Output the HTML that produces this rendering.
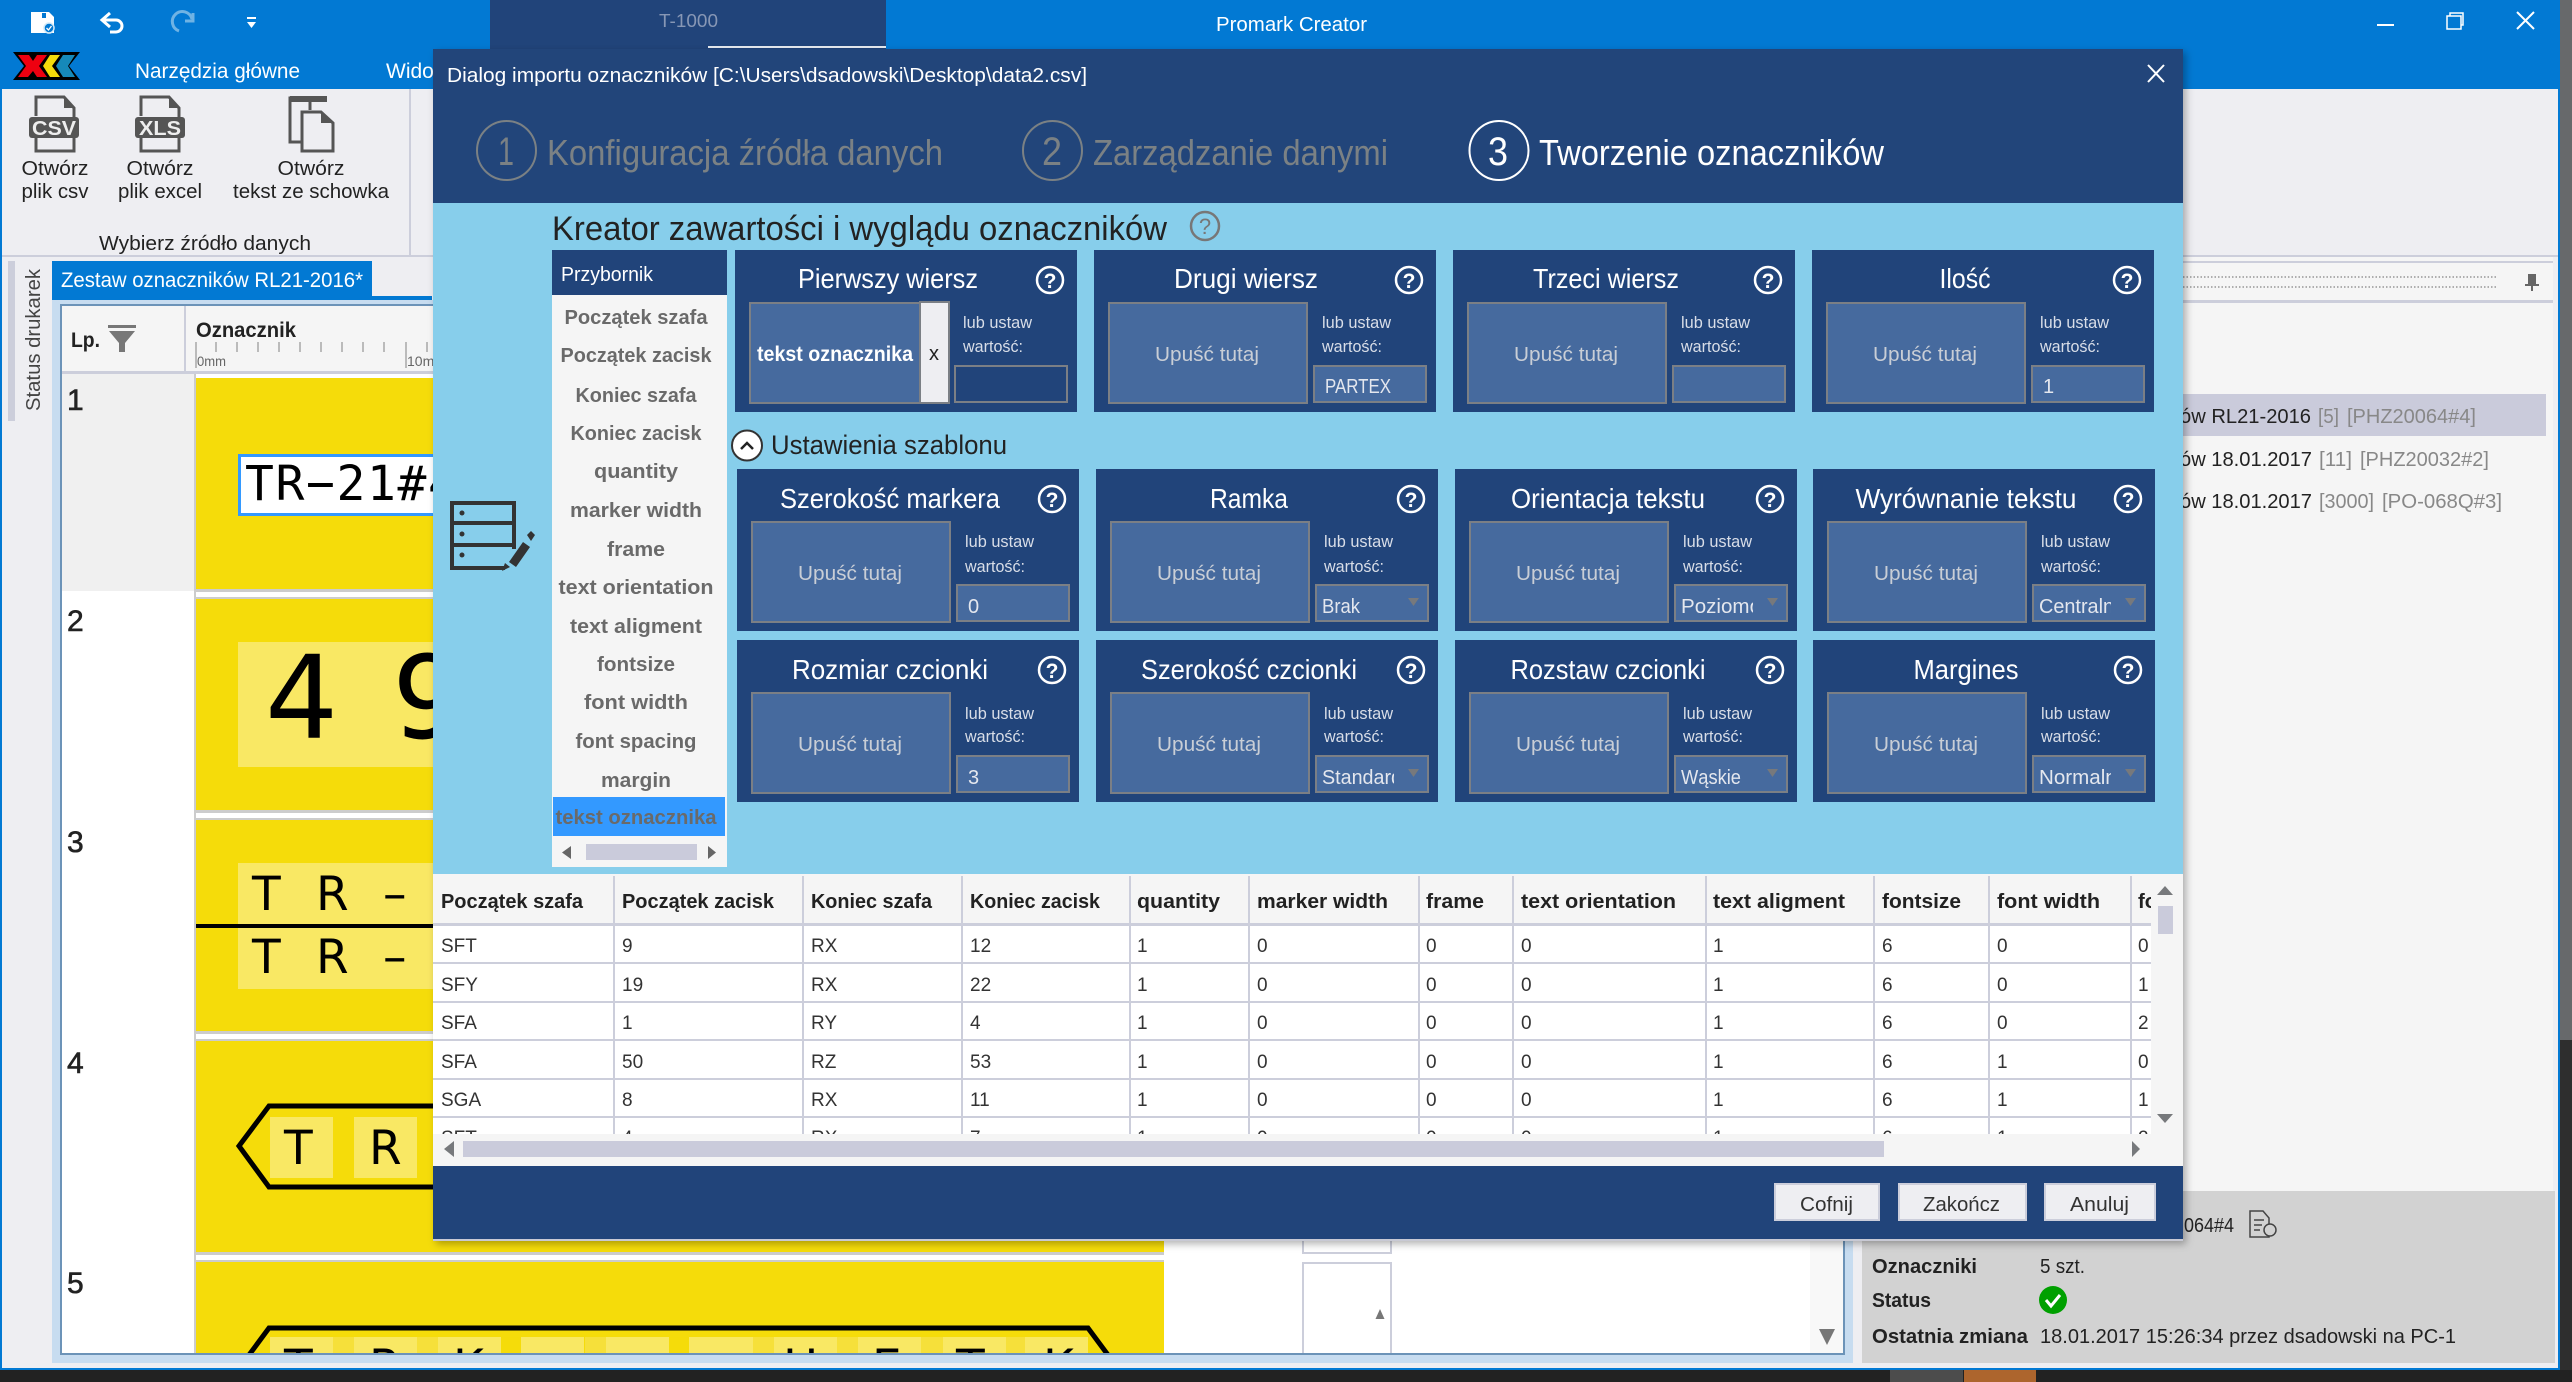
<!DOCTYPE html>
<html lang="pl"><head><meta charset="utf-8"><title>Promark Creator</title>
<style>
html,body{margin:0;padding:0;width:2572px;height:1382px;overflow:hidden;background:#fff}
svg{display:block}
text{font-family:"Liberation Sans",sans-serif;white-space:pre}
.t{font-size:28px;fill:#fff;text-anchor:middle}
.q{font-size:21px;font-weight:bold;fill:#fff;text-anchor:middle}
.s{font-size:17px;fill:#d9dee8}
.u{font-size:20px;fill:#c9ced6;text-anchor:middle}
.v{font-size:20px;fill:#e4e7ee}
.l{font-size:20px;font-weight:bold;fill:#6a6a6a;text-anchor:middle}
.h{font-size:20px;font-weight:bold;fill:#222}
.c{font-size:19px;fill:#333}
.r{font-size:20px;fill:#222}
.g{font-size:20px;fill:#888}
.b{font-size:20px;font-weight:bold;fill:#222}
.d{font-family:"DejaVu Sans",sans-serif;fill:#000}
</style></head><body>
<svg xmlns="http://www.w3.org/2000/svg" width="2572" height="1382" viewBox="0 0 2572 1382">
<defs>
<clipPath id="tc"><rect x="433" y="876" width="1718" height="258"/></clipPath>
<clipPath id="lc"><rect x="62" y="306" width="1781" height="1047"/></clipPath>
<clipPath id="sel"><rect x="226" y="115" width="72" height="38"/></clipPath>
<filter id="sh" x="-2%" y="-2%" width="104%" height="104%"><feDropShadow dx="3" dy="3" stdDeviation="4" flood-color="#000" flood-opacity=".3"/></filter>
<g id="cd">
<rect width="342" height="162" fill="#21447a"/>
<rect x="15" y="53" width="198" height="100" fill="#466a9e" stroke="#7b7f85" stroke-width="2"/>
<rect x="220" y="116" width="112" height="36" fill="#466a9e" stroke="#7b7f85" stroke-width="2"/>
<circle cx="315" cy="30" r="13" fill="none" stroke="#fff" stroke-width="2.5"/>
</g>
<path id="ar" d="M0 0h11l-5.500 8z" fill="#77797c"/>
</defs>

<!-- base -->
<rect width="2572" height="1382" fill="#f5f5f5"/>
<rect x="2560" y="0" width="12" height="1040" fill="#67696b"/>
<rect x="2560" y="1040" width="12" height="342" fill="#2e2e2e"/>
<rect x="0" y="1370" width="2572" height="12" fill="#222"/>
<rect x="1890" y="1370" width="73" height="12" fill="#4c4c4c"/>
<rect x="1964" y="1370" width="72" height="12" fill="#ad652d"/>
<rect x="0" y="0" width="2560" height="89" fill="#0279d3"/>
<rect x="0" y="0" width="2" height="1370" fill="#0279d3"/>
<rect x="2558" y="0" width="2" height="1370" fill="#0279d3"/>
<rect x="0" y="1368" width="2560" height="2" fill="#0279d3"/>
<rect x="2" y="89" width="2556" height="1279" fill="#eeeef2"/>
<rect x="409" y="89" width="2" height="166" fill="#cccedb"/>
<rect x="2" y="255" width="2556" height="2" fill="#cccedb"/>

<!-- title bar -->
<path d="M31 12h18l5 5v16H31z" fill="#fff"/><rect x="42" y="13" width="4" height="5" fill="#0279d3"/>
<circle cx="49" cy="28" r="5" fill="#0279d3" stroke="#d4eaf8" stroke-width="1.500"/>
<path d="M46.500 28l2 2 3-4" fill="none" stroke="#fff" stroke-width="1.300"/>
<path d="M110 13l-8 7 8 7M102 20h14a6 6 0 0 1 0 12h-6" fill="none" stroke="#fff" stroke-width="3"/>
<path d="M192 19a10 10 0 1 0-13 12M193 13v8h-8" fill="none" stroke="#6fb3e4" stroke-width="3"/>
<path d="M247 17h9v2h-9zM247 22h9l-4.500 6z" fill="#fff"/>
<rect x="490" y="0" width="396" height="49" fill="#21447a"/>
<rect x="708" y="46" width="178" height="2" fill="#e8ecf2"/>
<text x="659" y="27" font-size="18" fill="#8797b5" textLength="59" lengthAdjust="spacingAndGlyphs">T-1000</text>
<text x="1216" y="31" font-size="20" fill="#fff" textLength="151" lengthAdjust="spacingAndGlyphs">Promark Creator</text>
<rect x="2377" y="24" width="17" height="2" fill="#fff"/>
<path d="M2447 16h14v13h-14zM2450 16v-3h13v12h-2" fill="none" stroke="#fff" stroke-width="1.500"/>
<path d="M2517 12l17 17M2534 12l-17 17" stroke="#fff" stroke-width="2" fill="none"/>

<!-- logo -->
<path d="M13 52H80L69 66L80 80H13L24 66z" fill="#000"/>
<path d="M18 55H29L33 61L37 55H47L39 66L47 77H37L33 71L28 77H18L26 66z" fill="#ee0010"/>
<path d="M50 55h10L52 66l8 11H50L43 66z" fill="#f5dc0a"/>
<path d="M63 55h12L68 66l7 11H63L56 66z" fill="#1689b9"/>
<text x="135" y="78" font-size="21" fill="#fff" textLength="165" lengthAdjust="spacingAndGlyphs">Narzędzia główne</text>
<text x="386" y="78" font-size="21" fill="#fff">Widok</text>

<!-- ribbon -->
<g fill="none" stroke="#555" stroke-width="3">
<path d="M36 116V97h28l10 11v9M36 138v13h38v-13"/>
<path d="M141 116V97h28l10 11v9M141 138v13h38v-13"/>
<path d="M310 110v-12h-20v44h11M302 112v39h31v-28l-12-11z"/>
</g>
<rect x="290" y="96" width="37" height="6" fill="#555"/>
<path d="M64 97v11h10zM169 97v11h10zM321 112v11h12z" fill="#555"/>
<rect x="29" y="117" width="50" height="21" rx="3" fill="#555"/>
<rect x="135" y="117" width="50" height="21" rx="3" fill="#555"/>
<text x="54" y="135" font-size="20" font-weight="bold" fill="#eee" text-anchor="middle" textLength="44" lengthAdjust="spacingAndGlyphs">CSV</text>
<text x="160" y="135" font-size="20" font-weight="bold" fill="#eee" text-anchor="middle" textLength="42" lengthAdjust="spacingAndGlyphs">XLS</text>
<g font-size="20" fill="#222" text-anchor="middle">
<text x="55" y="175" textLength="67" lengthAdjust="spacingAndGlyphs">Otwórz</text>
<text x="55" y="198" textLength="67" lengthAdjust="spacingAndGlyphs">plik csv</text>
<text x="160" y="175" textLength="67" lengthAdjust="spacingAndGlyphs">Otwórz</text>
<text x="160" y="198" textLength="84" lengthAdjust="spacingAndGlyphs">plik excel</text>
<text x="311" y="175" textLength="67" lengthAdjust="spacingAndGlyphs">Otwórz</text>
<text x="311" y="198" textLength="156" lengthAdjust="spacingAndGlyphs">tekst ze schowka</text>
<text x="205" y="250" textLength="212" lengthAdjust="spacingAndGlyphs">Wybierz źródło danych</text>
</g>

<!-- left -->
<rect x="8" y="261" width="7" height="160" fill="#cccedb"/>
<text transform="translate(40,411) rotate(-90)" font-size="20" fill="#444" textLength="142" lengthAdjust="spacingAndGlyphs">Status drukarek</text>
<rect x="52" y="261" width="320" height="35" fill="#0279d3"/>
<rect x="52" y="296" width="380" height="4" fill="#0279d3"/>
<text x="61" y="287" font-size="21" fill="#fff" textLength="302" lengthAdjust="spacingAndGlyphs">Zestaw oznaczników RL21-2016*</text>
<rect x="52" y="300" width="1801" height="63" fill="#c7dcf0"/>
<rect x="52" y="300" width="8" height="1063" fill="#c7dcf0"/>
<rect x="52" y="1353" width="1801" height="10" fill="#c7dcf0"/>
<rect x="1845" y="300" width="8" height="1063" fill="#c7dcf0"/>
<rect x="61" y="305" width="1783" height="1049" fill="#fff" stroke="#6c93b8" stroke-width="2"/>
<rect x="62" y="306" width="1781" height="66" fill="#f5f5f5"/>
<rect x="62" y="371" width="1781" height="3" fill="#cccedb"/>
<rect x="184" y="306" width="2" height="66" fill="#cccedb"/>
<text x="71" y="347" font-size="21" font-weight="bold" fill="#222" textLength="29" lengthAdjust="spacingAndGlyphs">Lp.</text>
<path d="M108 325h28v3h-28zM109 331h26l-10 12v9h-6v-9z" fill="#777"/>
<text x="196" y="337" font-size="21" font-weight="bold" fill="#222" textLength="100" lengthAdjust="spacingAndGlyphs">Oznacznik</text>
<g fill="#bbb">
<rect x="195" y="342" width="2" height="26"/><rect x="215" y="342" width="2" height="10"/><rect x="236" y="342" width="2" height="10"/><rect x="257" y="342" width="2" height="10"/><rect x="278" y="342" width="2" height="10"/><rect x="299" y="342" width="2" height="10"/><rect x="320" y="342" width="2" height="10"/><rect x="341" y="342" width="2" height="10"/><rect x="362" y="342" width="2" height="10"/><rect x="383" y="342" width="2" height="10"/><rect x="405" y="342" width="2" height="26"/><rect x="426" y="342" width="2" height="10"/>
</g>
<text x="197" y="366" font-size="14" fill="#666" textLength="29" lengthAdjust="spacingAndGlyphs">0mm</text>
<text x="407" y="366" font-size="14" fill="#666">10mm</text>

<g clip-path="url(#lc)">
<rect x="62" y="374" width="132" height="217" fill="#f0f0f0"/>
<rect x="194" y="374" width="2" height="979" fill="#ccc"/>
<rect x="1164" y="374" width="2" height="979" fill="#fff"/>
<g fill="#f5dc0a">
<rect x="196" y="378" width="968" height="211"/>
<rect x="196" y="599" width="968" height="211"/>
<rect x="196" y="820" width="968" height="211"/>
<rect x="196" y="1041" width="968" height="211"/>
<rect x="196" y="1262" width="968" height="91"/>
</g>
<g fill="#ccc">
<rect x="194" y="589" width="970" height="3"/><rect x="194" y="597" width="970" height="2"/>
<rect x="194" y="810" width="970" height="3"/><rect x="194" y="818" width="970" height="2"/>
<rect x="194" y="1031" width="970" height="3"/><rect x="194" y="1039" width="970" height="2"/>
<rect x="194" y="1252" width="970" height="3"/><rect x="194" y="1260" width="970" height="2"/>
</g>
<rect x="1303" y="1200" width="88" height="53" fill="#fff" stroke="#cccedb" stroke-width="2"/>
<rect x="1303" y="1263" width="88" height="92" fill="#fff" stroke="#cccedb" stroke-width="2"/>
<rect x="1810" y="1230" width="33" height="123" fill="#f8f8f8"/>
<path d="M1380 1309l4.500 10h-9z" fill="#777"/>
<path d="M1819 1329h16l-8 16z" fill="#777"/>
<g font-size="30" fill="#222" stroke="#222" stroke-width=".6"><text x="67" y="410">1</text><text x="67" y="631">2</text><text x="67" y="852">3</text><text x="67" y="1073">4</text><text x="67" y="1293">5</text></g>
<!-- markers -->
<rect x="239.500" y="455.500" width="300" height="59" fill="#fff" stroke="#3399ff" stroke-width="3"/>
<text x="245" y="500" style="font-family:'DejaVu Sans Mono',monospace;font-size:48px;letter-spacing:1.600px;fill:#000">TR−21#4</text>
<rect x="238" y="642" width="400" height="125" fill="#f9e864"/>
<text class="d" x="265" y="738" font-size="115">4</text><text class="d" x="392" y="738" font-size="115">9</text>
<rect x="238" y="863" width="400" height="126" fill="#f9e864"/>
<rect x="196" y="924" width="400" height="4" fill="#000"/>
<g font-size="47"><text class="d" x="252" y="910">T</text><text class="d" x="316" y="910">R</text><text class="d" x="383" y="910">–</text><text class="d" x="252" y="973">T</text><text class="d" x="316" y="973">R</text><text class="d" x="383" y="973">–</text></g>
<g fill="#f9e864"><rect x="270" y="1117" width="63" height="61"/><rect x="354" y="1117" width="63" height="61"/><rect x="438" y="1117" width="63" height="61"/></g>
<path d="M440 1106H269l-30 40 30 41h171" fill="none" stroke="#000" stroke-width="5"/>
<text class="d" x="284" y="1164" font-size="47">T</text><text class="d" x="369" y="1164" font-size="47">R</text>
<g fill="#f6e03a"><rect x="333" y="1337" width="21" height="20"/><rect x="417" y="1337" width="21" height="20"/><rect x="585" y="1337" width="21" height="20"/><rect x="753" y="1337" width="21" height="20"/><rect x="921" y="1337" width="22" height="20"/><rect x="837" y="1337" width="21" height="20"/><rect x="1006" y="1337" width="19" height="20"/></g>
<g fill="#f9e864"><rect x="270" y="1337" width="63" height="20"/><rect x="354" y="1337" width="63" height="20"/><rect x="438" y="1337" width="63" height="20"/><rect x="521" y="1337" width="63" height="20"/><rect x="606" y="1337" width="63" height="20"/><rect x="689" y="1337" width="64" height="20"/><rect x="774" y="1337" width="63" height="20"/><rect x="858" y="1337" width="63" height="20"/><rect x="943" y="1337" width="63" height="20"/><rect x="1025" y="1337" width="63" height="20"/></g>
<path d="M249 1355l20-27h819l20 27" fill="none" stroke="#000" stroke-width="5"/>
<g font-size="47"><text class="d" x="284" y="1383">T</text><text class="d" x="369" y="1383">R</text><text class="d" x="453" y="1383">K</text><text class="d" x="783" y="1383">H</text><text class="d" x="872" y="1383">E</text><text class="d" x="956" y="1383">T</text><text class="d" x="1043" y="1383">K</text></g>
</g>

<!-- right panel -->
<rect x="2183" y="257" width="370" height="934" fill="#f5f5f5"/>
<rect x="2183" y="89" width="375" height="166" fill="#eeeef2"/>
<rect x="2183" y="255" width="375" height="2" fill="#cccedb"/>
<rect x="2183" y="261" width="370" height="2" fill="#cccedb"/>
<rect x="2183" y="300" width="370" height="3" fill="#cccedb"/>
<rect x="2553" y="257" width="5" height="1106" fill="#eeeef2"/>
<path d="M2183 277h314M2183 287h314" stroke="#666" stroke-width="1" stroke-dasharray="1.500 2"/>
<path d="M2528 274h8v10h3v2h-6v5h-2v-5h-6v-2h3z" fill="#666"/>
<rect x="2183" y="394" width="363" height="42" fill="#cacbdb"/>
<text class="r" x="2180" y="423" textLength="131" lengthAdjust="spacingAndGlyphs">ów RL21-2016</text>
<text class="g" x="2318" y="423" textLength="21" lengthAdjust="spacingAndGlyphs">[5]</text>
<text class="g" x="2347" y="423" textLength="129" lengthAdjust="spacingAndGlyphs">[PHZ20064#4]</text>
<text class="r" x="2180" y="466" textLength="132" lengthAdjust="spacingAndGlyphs">ów 18.01.2017</text>
<text class="g" x="2319" y="466" textLength="33" lengthAdjust="spacingAndGlyphs">[11]</text>
<text class="g" x="2360" y="466" textLength="129" lengthAdjust="spacingAndGlyphs">[PHZ20032#2]</text>
<text class="r" x="2180" y="508" textLength="132" lengthAdjust="spacingAndGlyphs">ów 18.01.2017</text>
<text class="g" x="2319" y="508" textLength="55" lengthAdjust="spacingAndGlyphs">[3000]</text>
<text class="g" x="2382" y="508" textLength="120" lengthAdjust="spacingAndGlyphs">[PO-068Q#3]</text>
<!-- grey details -->
<rect x="1862" y="1191" width="693" height="172" fill="#d2d2d2"/>
<text x="2184" y="1232" font-size="20" fill="#222" textLength="50" lengthAdjust="spacingAndGlyphs">064#4</text>
<path d="M2250 1211h13l6 7v19h-19zM2254 1220h10M2254 1225h8M2254 1230h6" fill="none" stroke="#444" stroke-width="1.500"/>
<circle cx="2270" cy="1230" r="6" fill="#d2d2d2" stroke="#444" stroke-width="1.500"/>
<text class="b" x="1872" y="1273" textLength="105" lengthAdjust="spacingAndGlyphs">Oznaczniki</text>
<text class="r" x="2040" y="1273" textLength="45" lengthAdjust="spacingAndGlyphs">5 szt.</text>
<text class="b" x="1872" y="1307" textLength="59" lengthAdjust="spacingAndGlyphs">Status</text>
<circle cx="2053" cy="1300" r="14" fill="#00a000"/>
<path d="M2046 1300l5 6 9-11" fill="none" stroke="#fff" stroke-width="3"/>
<text class="b" x="1872" y="1343" textLength="156" lengthAdjust="spacingAndGlyphs">Ostatnia zmiana</text>
<text class="r" x="2040" y="1343" textLength="416" lengthAdjust="spacingAndGlyphs">18.01.2017 15:26:34 przez dsadowski na PC-1</text>

<!-- dialog -->
<rect x="433" y="49" width="1750" height="1192" fill="#21447a" filter="url(#sh)"/>
<rect x="433" y="203" width="1750" height="671" fill="#87ceeb"/>
<rect x="433" y="874" width="1750" height="292" fill="#f5f5f5"/>
<rect x="433" y="1239" width="1750" height="2" fill="#c8c9d4"/>
<text x="447" y="82" font-size="20" fill="#fff" textLength="640" lengthAdjust="spacingAndGlyphs">Dialog importu oznaczników [C:\Users\dsadowski\Desktop\data2.csv]</text>
<path d="M2148 65l16 17M2164 65l-16 17" stroke="#fff" stroke-width="2" fill="none"/>

<circle cx="506.500" cy="150.500" r="29.500" fill="none" stroke="#7b8184" stroke-width="2"/>
<text x="506" y="165" font-size="40" fill="#7b8184" text-anchor="middle" textLength="16" lengthAdjust="spacingAndGlyphs">1</text>
<text x="547" y="165" font-size="36" fill="#7b8184" textLength="396" lengthAdjust="spacingAndGlyphs">Konfiguracja źródła danych</text>
<circle cx="1052.500" cy="150.500" r="29.500" fill="none" stroke="#7b8184" stroke-width="2"/>
<text x="1052" y="165" font-size="40" fill="#7b8184" text-anchor="middle" textLength="20" lengthAdjust="spacingAndGlyphs">2</text>
<text x="1093" y="165" font-size="36" fill="#7b8184" textLength="295" lengthAdjust="spacingAndGlyphs">Zarządzanie danymi</text>
<circle cx="1499" cy="150.500" r="29.500" fill="none" stroke="#fff" stroke-width="2"/>
<text x="1498" y="165" font-size="40" fill="#fff" text-anchor="middle" textLength="20" lengthAdjust="spacingAndGlyphs">3</text>
<text x="1539" y="165" font-size="36" fill="#fff" textLength="345" lengthAdjust="spacingAndGlyphs">Tworzenie oznaczników</text>

<text x="552" y="240" font-size="34" fill="#222" textLength="615" lengthAdjust="spacingAndGlyphs">Kreator zawartości i wyglądu oznaczników</text>
<circle cx="1205" cy="226" r="14" fill="none" stroke="#777" stroke-width="2.500"/>
<text x="1205" y="234" font-size="22" fill="#777" text-anchor="middle">?</text>

<!-- icon -->
<path d="M505 568H452v-65h62v46" fill="none" stroke="#333" stroke-width="4"/>
<rect x="450" y="521" width="65" height="4" fill="#333"/><rect x="450" y="543" width="65" height="4" fill="#333"/>
<circle cx="462" cy="513" r="2.500" fill="#333"/><circle cx="462" cy="534" r="2.500" fill="#333"/><circle cx="462" cy="555" r="2.500" fill="#333"/>
<path d="M523 542l7 5-14 20-7-5zM527 535l4-4 4 4-4 6zM505 563l5 4-8 4z" fill="#333"/>

<!-- toolbox -->
<rect x="552" y="250" width="175" height="45" fill="#21447a"/>
<rect x="552" y="295" width="175" height="572" fill="#f5f5f5"/>
<text x="561" y="281" font-size="20" fill="#fff" textLength="92" lengthAdjust="spacingAndGlyphs">Przybornik</text>
<rect x="553" y="797" width="172" height="39" fill="#3399ff"/>
<text class="l" x="636" y="324" textLength="143" lengthAdjust="spacingAndGlyphs">Początek szafa</text>
<text class="l" x="636" y="362" textLength="151" lengthAdjust="spacingAndGlyphs">Początek zacisk</text>
<text class="l" x="636" y="402" textLength="121" lengthAdjust="spacingAndGlyphs">Koniec szafa</text>
<text class="l" x="636" y="440" textLength="131" lengthAdjust="spacingAndGlyphs">Koniec zacisk</text>
<text class="l" x="636" y="478" textLength="84" lengthAdjust="spacingAndGlyphs">quantity</text>
<text class="l" x="636" y="517" textLength="132" lengthAdjust="spacingAndGlyphs">marker width</text>
<text class="l" x="636" y="556" textLength="58" lengthAdjust="spacingAndGlyphs">frame</text>
<text class="l" x="636" y="594" textLength="155" lengthAdjust="spacingAndGlyphs">text orientation</text>
<text class="l" x="636" y="633" textLength="132" lengthAdjust="spacingAndGlyphs">text aligment</text>
<text class="l" x="636" y="671" textLength="78" lengthAdjust="spacingAndGlyphs">fontsize</text>
<text class="l" x="636" y="709" textLength="104" lengthAdjust="spacingAndGlyphs">font width</text>
<text class="l" x="636" y="748" textLength="121" lengthAdjust="spacingAndGlyphs">font spacing</text>
<text class="l" x="636" y="787" textLength="70" lengthAdjust="spacingAndGlyphs">margin</text>
<text class="l" x="636" y="824" textLength="161" lengthAdjust="spacingAndGlyphs">tekst oznacznika</text>
<path d="M571 846v13l-9-6.500zM708 846v13l8-6.500z" fill="#666"/>
<rect x="586" y="844" width="111" height="16" fill="#cacbdb"/>

<!-- cards row 1 -->
<g transform="translate(735,250)"><use href="#cd"/>
<rect x="220" y="116" width="112" height="36" fill="#21447a" stroke="#7b7f85" stroke-width="2"/>
<rect x="185" y="52" width="29" height="101" fill="#eeeef2" stroke="#7b7f85" stroke-width="2"/>
<text class="t" x="153" y="38" textLength="180" lengthAdjust="spacingAndGlyphs">Pierwszy wiersz</text><text class="q" x="315" y="38">?</text>
<text x="22" y="111" font-size="21" font-weight="bold" fill="#fff" textLength="156" lengthAdjust="spacingAndGlyphs">tekst oznacznika</text>
<text x="199" y="110" font-size="20" fill="#222" text-anchor="middle">x</text>
<text class="s" x="228" y="78" textLength="69" lengthAdjust="spacingAndGlyphs">lub ustaw</text><text class="s" x="228" y="102" textLength="60" lengthAdjust="spacingAndGlyphs">wartość:</text></g>
<g transform="translate(1094,250)"><use href="#cd"/>
<text class="t" x="152" y="38" textLength="144" lengthAdjust="spacingAndGlyphs">Drugi wiersz</text><text class="q" x="315" y="38">?</text>
<text class="u" x="113" y="111" textLength="104" lengthAdjust="spacingAndGlyphs">Upuść tutaj</text>
<text class="s" x="228" y="78" textLength="69" lengthAdjust="spacingAndGlyphs">lub ustaw</text><text class="s" x="228" y="102" textLength="60" lengthAdjust="spacingAndGlyphs">wartość:</text>
<text class="v" x="231" y="143" textLength="66" lengthAdjust="spacingAndGlyphs">PARTEX</text></g>
<g transform="translate(1453,250)"><use href="#cd"/>
<text class="t" x="153" y="38" textLength="146" lengthAdjust="spacingAndGlyphs">Trzeci wiersz</text><text class="q" x="315" y="38">?</text>
<text class="u" x="113" y="111" textLength="104" lengthAdjust="spacingAndGlyphs">Upuść tutaj</text>
<text class="s" x="228" y="78" textLength="69" lengthAdjust="spacingAndGlyphs">lub ustaw</text><text class="s" x="228" y="102" textLength="60" lengthAdjust="spacingAndGlyphs">wartość:</text></g>
<g transform="translate(1812,250)"><use href="#cd"/>
<text class="t" x="153" y="38" textLength="51" lengthAdjust="spacingAndGlyphs">Ilość</text><text class="q" x="315" y="38">?</text>
<text class="u" x="113" y="111" textLength="104" lengthAdjust="spacingAndGlyphs">Upuść tutaj</text>
<text class="s" x="228" y="78" textLength="69" lengthAdjust="spacingAndGlyphs">lub ustaw</text><text class="s" x="228" y="102" textLength="60" lengthAdjust="spacingAndGlyphs">wartość:</text>
<text class="v" x="231" y="143">1</text></g>

<circle cx="747" cy="445.500" r="15" fill="#fff" stroke="#333" stroke-width="2"/>
<path d="M741 449l6-6 6 6" fill="none" stroke="#222" stroke-width="2.500"/>
<text x="771" y="454" font-size="27" fill="#222" textLength="236" lengthAdjust="spacingAndGlyphs">Ustawienia szablonu</text>

<!-- cards row 2 -->
<g transform="translate(737,469)"><use href="#cd"/>
<text class="t" x="153" y="39" textLength="220" lengthAdjust="spacingAndGlyphs">Szerokość markera</text><text class="q" x="315" y="38">?</text>
<text class="u" x="113" y="111" textLength="104" lengthAdjust="spacingAndGlyphs">Upuść tutaj</text>
<text class="s" x="228" y="78" textLength="69" lengthAdjust="spacingAndGlyphs">lub ustaw</text><text class="s" x="228" y="103" textLength="60" lengthAdjust="spacingAndGlyphs">wartość:</text>
<text class="v" x="231" y="144">0</text></g>
<g transform="translate(1096,469)"><use href="#cd"/>
<text class="t" x="153" y="39" textLength="78" lengthAdjust="spacingAndGlyphs">Ramka</text><text class="q" x="315" y="38">?</text>
<text class="u" x="113" y="111" textLength="104" lengthAdjust="spacingAndGlyphs">Upuść tutaj</text>
<text class="s" x="228" y="78" textLength="69" lengthAdjust="spacingAndGlyphs">lub ustaw</text><text class="s" x="228" y="103" textLength="60" lengthAdjust="spacingAndGlyphs">wartość:</text>
<g clip-path="url(#sel)"><text class="v" x="226" y="144" textLength="38" lengthAdjust="spacingAndGlyphs">Brak</text></g><use href="#ar" x="312" y="129"/></g>
<g transform="translate(1455,469)"><use href="#cd"/>
<text class="t" x="153" y="39" textLength="194" lengthAdjust="spacingAndGlyphs">Orientacja tekstu</text><text class="q" x="315" y="38">?</text>
<text class="u" x="113" y="111" textLength="104" lengthAdjust="spacingAndGlyphs">Upuść tutaj</text>
<text class="s" x="228" y="78" textLength="69" lengthAdjust="spacingAndGlyphs">lub ustaw</text><text class="s" x="228" y="103" textLength="60" lengthAdjust="spacingAndGlyphs">wartość:</text>
<g clip-path="url(#sel)"><text class="v" x="226" y="144" textLength="80" lengthAdjust="spacingAndGlyphs">Poziomo</text></g><use href="#ar" x="312" y="129"/></g>
<g transform="translate(1813,469)"><use href="#cd"/>
<text class="t" x="153" y="39" textLength="221" lengthAdjust="spacingAndGlyphs">Wyrównanie tekstu</text><text class="q" x="315" y="38">?</text>
<text class="u" x="113" y="111" textLength="104" lengthAdjust="spacingAndGlyphs">Upuść tutaj</text>
<text class="s" x="228" y="78" textLength="69" lengthAdjust="spacingAndGlyphs">lub ustaw</text><text class="s" x="228" y="103" textLength="60" lengthAdjust="spacingAndGlyphs">wartość:</text>
<g clip-path="url(#sel)"><text class="v" x="226" y="144" textLength="85" lengthAdjust="spacingAndGlyphs">Centralny</text></g><use href="#ar" x="312" y="129"/></g>

<!-- cards row 3 -->
<g transform="translate(737,640)"><use href="#cd"/>
<text class="t" x="153" y="39" textLength="196" lengthAdjust="spacingAndGlyphs">Rozmiar czcionki</text><text class="q" x="315" y="38">?</text>
<text class="u" x="113" y="111" textLength="104" lengthAdjust="spacingAndGlyphs">Upuść tutaj</text>
<text class="s" x="228" y="79" textLength="69" lengthAdjust="spacingAndGlyphs">lub ustaw</text><text class="s" x="228" y="102" textLength="60" lengthAdjust="spacingAndGlyphs">wartość:</text>
<text class="v" x="231" y="144">3</text></g>
<g transform="translate(1096,640)"><use href="#cd"/>
<text class="t" x="153" y="39" textLength="216" lengthAdjust="spacingAndGlyphs">Szerokość czcionki</text><text class="q" x="315" y="38">?</text>
<text class="u" x="113" y="111" textLength="104" lengthAdjust="spacingAndGlyphs">Upuść tutaj</text>
<text class="s" x="228" y="79" textLength="69" lengthAdjust="spacingAndGlyphs">lub ustaw</text><text class="s" x="228" y="102" textLength="60" lengthAdjust="spacingAndGlyphs">wartość:</text>
<g clip-path="url(#sel)"><text class="v" x="226" y="144" textLength="80" lengthAdjust="spacingAndGlyphs">Standard</text></g><use href="#ar" x="312" y="129"/></g>
<g transform="translate(1455,640)"><use href="#cd"/>
<text class="t" x="153" y="39" textLength="195" lengthAdjust="spacingAndGlyphs">Rozstaw czcionki</text><text class="q" x="315" y="38">?</text>
<text class="u" x="113" y="111" textLength="104" lengthAdjust="spacingAndGlyphs">Upuść tutaj</text>
<text class="s" x="228" y="79" textLength="69" lengthAdjust="spacingAndGlyphs">lub ustaw</text><text class="s" x="228" y="102" textLength="60" lengthAdjust="spacingAndGlyphs">wartość:</text>
<g clip-path="url(#sel)"><text class="v" x="226" y="144" textLength="60" lengthAdjust="spacingAndGlyphs">Wąskie</text></g><use href="#ar" x="312" y="129"/></g>
<g transform="translate(1813,640)"><use href="#cd"/>
<text class="t" x="153" y="39" textLength="105" lengthAdjust="spacingAndGlyphs">Margines</text><text class="q" x="315" y="38">?</text>
<text class="u" x="113" y="111" textLength="104" lengthAdjust="spacingAndGlyphs">Upuść tutaj</text>
<text class="s" x="228" y="79" textLength="69" lengthAdjust="spacingAndGlyphs">lub ustaw</text><text class="s" x="228" y="102" textLength="60" lengthAdjust="spacingAndGlyphs">wartość:</text>
<g clip-path="url(#sel)"><text class="v" x="226" y="144" textLength="88" lengthAdjust="spacingAndGlyphs">Normalny</text></g><use href="#ar" x="312" y="129"/></g>

<!-- table -->
<rect x="433" y="925" width="1718" height="209" fill="#fff"/>
<g clip-path="url(#tc)">
<g fill="#cccedb">
<rect x="433" y="923" width="1718" height="3"/><rect x="433" y="962" width="1718" height="2"/><rect x="433" y="1001" width="1718" height="2"/><rect x="433" y="1039" width="1718" height="2"/><rect x="433" y="1078" width="1718" height="2"/><rect x="433" y="1116" width="1718" height="2"/>
<rect x="613" y="876" width="2" height="258"/><rect x="802" y="876" width="2" height="258"/><rect x="961" y="876" width="2" height="258"/><rect x="1129" y="876" width="2" height="258"/><rect x="1248" y="876" width="2" height="258"/><rect x="1418" y="876" width="2" height="258"/><rect x="1512" y="876" width="2" height="258"/><rect x="1705" y="876" width="2" height="258"/><rect x="1873" y="876" width="2" height="258"/><rect x="1988" y="876" width="2" height="258"/><rect x="2130" y="876" width="2" height="258"/>
</g>
<text class="h" x="441" y="908" textLength="142" lengthAdjust="spacingAndGlyphs">Początek szafa</text>
<text class="h" x="622" y="908" textLength="152" lengthAdjust="spacingAndGlyphs">Początek zacisk</text>
<text class="h" x="811" y="908" textLength="121" lengthAdjust="spacingAndGlyphs">Koniec szafa</text>
<text class="h" x="970" y="908" textLength="130" lengthAdjust="spacingAndGlyphs">Koniec zacisk</text>
<text class="h" x="1137" y="908" textLength="83" lengthAdjust="spacingAndGlyphs">quantity</text>
<text class="h" x="1257" y="908" textLength="131" lengthAdjust="spacingAndGlyphs">marker width</text>
<text class="h" x="1426" y="908" textLength="58" lengthAdjust="spacingAndGlyphs">frame</text>
<text class="h" x="1521" y="908" textLength="155" lengthAdjust="spacingAndGlyphs">text orientation</text>
<text class="h" x="1713" y="908" textLength="132" lengthAdjust="spacingAndGlyphs">text aligment</text>
<text class="h" x="1882" y="908" textLength="79" lengthAdjust="spacingAndGlyphs">fontsize</text>
<text class="h" x="1997" y="908" textLength="103" lengthAdjust="spacingAndGlyphs">font width</text>
<text class="h" x="2138" y="908" textLength="121" lengthAdjust="spacingAndGlyphs">font spacing</text>
<text class="c" y="952"><tspan x="441">SFT</tspan><tspan x="622">9</tspan><tspan x="811">RX</tspan><tspan x="970">12</tspan><tspan x="1137">1</tspan><tspan x="1257">0</tspan><tspan x="1426">0</tspan><tspan x="1521">0</tspan><tspan x="1713">1</tspan><tspan x="1882">6</tspan><tspan x="1997">0</tspan><tspan x="2138">0</tspan></text>
<text class="c" y="991"><tspan x="441">SFY</tspan><tspan x="622">19</tspan><tspan x="811">RX</tspan><tspan x="970">22</tspan><tspan x="1137">1</tspan><tspan x="1257">0</tspan><tspan x="1426">0</tspan><tspan x="1521">0</tspan><tspan x="1713">1</tspan><tspan x="1882">6</tspan><tspan x="1997">0</tspan><tspan x="2138">1</tspan></text>
<text class="c" y="1029"><tspan x="441">SFA</tspan><tspan x="622">1</tspan><tspan x="811">RY</tspan><tspan x="970">4</tspan><tspan x="1137">1</tspan><tspan x="1257">0</tspan><tspan x="1426">0</tspan><tspan x="1521">0</tspan><tspan x="1713">1</tspan><tspan x="1882">6</tspan><tspan x="1997">0</tspan><tspan x="2138">2</tspan></text>
<text class="c" y="1068"><tspan x="441">SFA</tspan><tspan x="622">50</tspan><tspan x="811">RZ</tspan><tspan x="970">53</tspan><tspan x="1137">1</tspan><tspan x="1257">0</tspan><tspan x="1426">0</tspan><tspan x="1521">0</tspan><tspan x="1713">1</tspan><tspan x="1882">6</tspan><tspan x="1997">1</tspan><tspan x="2138">0</tspan></text>
<text class="c" y="1106"><tspan x="441">SGA</tspan><tspan x="622">8</tspan><tspan x="811">RX</tspan><tspan x="970">11</tspan><tspan x="1137">1</tspan><tspan x="1257">0</tspan><tspan x="1426">0</tspan><tspan x="1521">0</tspan><tspan x="1713">1</tspan><tspan x="1882">6</tspan><tspan x="1997">1</tspan><tspan x="2138">1</tspan></text>
<text class="c" y="1144"><tspan x="441">SFT</tspan><tspan x="622">4</tspan><tspan x="811">RX</tspan><tspan x="970">7</tspan><tspan x="1137">1</tspan><tspan x="1257">0</tspan><tspan x="1426">0</tspan><tspan x="1521">0</tspan><tspan x="1713">1</tspan><tspan x="1882">6</tspan><tspan x="1997">1</tspan><tspan x="2138">2</tspan></text>
</g>
<!-- scrollbars -->
<path d="M2157 895l8-9 8 9zM2157 1114l8 9 8-9zM454 1141v16l-10-8zM2132 1141v16l8-8z" fill="#77797c"/>
<rect x="2158" y="906" width="15" height="28" fill="#cacbdb"/>
<rect x="463" y="1141" width="1421" height="16" fill="#cacbdb"/>

<!-- footer -->
<rect x="433" y="1166" width="1750" height="73" fill="#21447a"/>
<g fill="#eeeef2" stroke="#cccedb" stroke-width="2">
<rect x="1775" y="1184" width="104" height="36"/><rect x="1899" y="1184" width="127" height="36"/><rect x="2045" y="1184" width="110" height="36"/>
</g>
<g font-size="20" fill="#333">
<text x="1800" y="1211" textLength="53" lengthAdjust="spacingAndGlyphs">Cofnij</text>
<text x="1923" y="1211" textLength="77" lengthAdjust="spacingAndGlyphs">Zakończ</text>
<text x="2070" y="1211" textLength="59" lengthAdjust="spacingAndGlyphs">Anuluj</text>
</g>
</svg>
</body></html>
